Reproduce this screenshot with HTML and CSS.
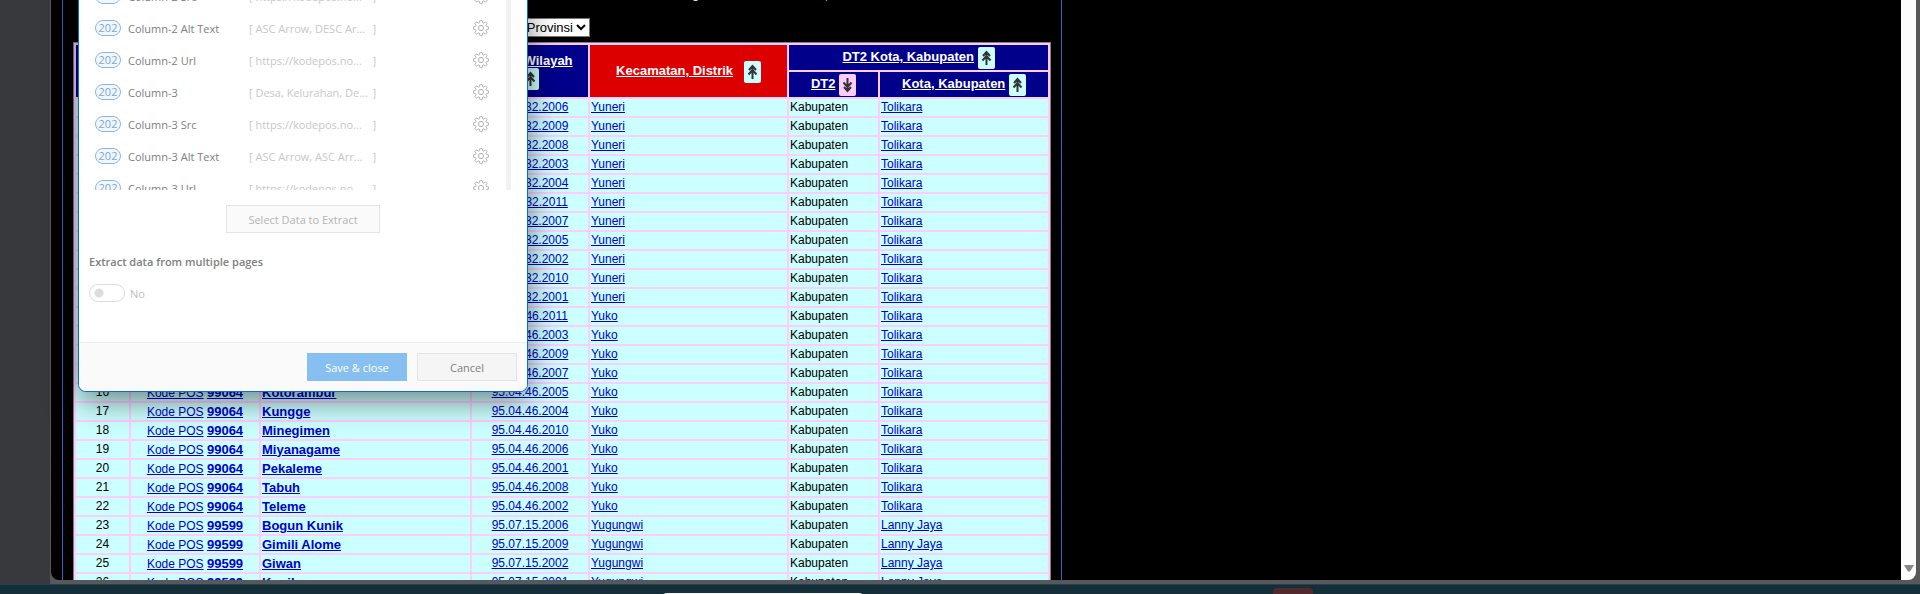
FILE: index.html
```
<!DOCTYPE html>
<html lang="id">
<head>
<meta charset="utf-8">
<title>Kode Pos</title>
<link rel="stylesheet" href="styles.css">
</head>
<body>
<svg class="defs" aria-hidden="true">
  <symbol id="gear" viewBox="0 0 16 16">
    <path d="M6.8 .6h2.4l.4 2 1.2.5 1.7-1.2 1.6 1.6-1.2 1.7.5 1.2 2 .4v2.4l-2 .4-.5 1.2 1.2 1.7-1.6 1.6-1.7-1.2-1.2.5-.4 2H6.8l-.4-2-1.2-.5-1.7 1.2-1.6-1.6 1.2-1.7-.5-1.2-2-.4V6.8l2-.4.5-1.2-1.2-1.7 1.6-1.6 1.7 1.2 1.2-.5z"/>
    <circle cx="8" cy="8" r="2.6"/>
  </symbol>
  <symbol id="arrow" viewBox="0 0 17 22">
    <path d="M8.5 18V4.500M5 9l3.500-4 3.500 4M4.500 13.500l4-4.500 4 4.500"/>
  </symbol>
</svg>
<div class="desktop">
  <div class="window">
    <aside class="rail"></aside>
    <main class="page">
      <div class="sheet">
        <p class="intro">Ruangan di Indonesia <a href="#">Kode pos</a></p>
        <div class="filter">
          <select aria-label="Provinsi"><option>Pilih Provinsi</option></select>
        </div>
        <table class="codes">
          <colgroup><col class="c-no"><col class="c-pos"><col class="c-name"><col class="c-code"><col class="c-kec"><col class="c-dt"><col class="c-kota"></colgroup>
          <thead>
            <tr><th rowspan="2"></th><th rowspan="2"></th><th rowspan="2"></th>
              <th rowspan="2"><a href="#">Kode Wilayah</a><br><svg class="sort"><use href="#arrow"/></svg></th>
              <th rowspan="2" class="active"><a href="#">Kecamatan, Distrik</a> &nbsp; <svg class="sort"><use href="#arrow"/></svg></th>
              <th colspan="2"><a href="#">DT2 Kota, Kabupaten</a> <svg class="sort"><use href="#arrow"/></svg></th></tr>
            <tr><th><a href="#">DT2</a> <svg class="sort desc"><use href="#arrow"/></svg></th>
              <th><a href="#">Kota, Kabupaten</a> <svg class="sort"><use href="#arrow"/></svg></th></tr>
          </thead>
          <tbody id="rows"></tbody>
        </table>
      </div>
    </main>
    <div class="scroll"><svg class="down" viewBox="0 0 10 7"><path d="M0 0h10L6 6.500H4z"/></svg></div>
  </div>
  <div class="taskbar"><span class="search"></span><span class="app"></span></div>
</div>
<section class="dialog" role="dialog" aria-label="Extract data">
  <div class="list" id="fields"></div>
  <div class="pick"><button class="btn faint">Select Data to Extract</button></div>
  <h2 class="heading">Extract data from multiple pages</h2>
  <label class="toggle"><input type="checkbox" role="switch">No</label>
  <footer class="actions"><button class="btn primary">Save &amp; close</button><button class="btn">Cancel</button></footer>
</section>
<script src="app.js"></script>
</body>
</html>
```
FILE: styles.css
```
* { box-sizing: border-box; }
body {
  margin: 0;
  height: 100vh;
  overflow: hidden;
  background: #142e3a;
  font-family: "Liberation Sans", Arial, sans-serif;
  font-size: 12px;
}
.defs { display: none; }
.desktop { display: flex; flex-direction: column; height: 100vh; }
.window {
  flex: 1;
  min-height: 0;
  display: flex;
  background: #57585c;
  padding: 0 4px 4px 0;
}
.rail {
  width: 51px;
  background: #38393d;
  border-right: 1px solid #57585c;
  margin-bottom: -4px;
}
.page {
  flex: 1;
  min-width: 0;
  background: #000;
  overflow: hidden;
  border-bottom-left-radius: 8px;
  padding-left: 11px;
}
.sheet {
  width: 1000px;
  height: 100%;
  overflow: hidden;
  border: solid #3060c8;
  border-width: 0 1px;
  padding: 0 10px;
}
.intro {
  margin: -14px 0 0;
  height: 32px;
  line-height: 15px;
  font-size: 13px;
  color: #fff;
  padding-left: 588px;
}
.intro a { color: #4ab0e0; text-decoration: none; }
.filter { height: 24px; padding-left: 393px; }
.filter select {
  display: block;
  height: 19px;
  width: 124px;
  font: 13px "Liberation Sans", Arial, sans-serif;
  text-align: right;
  background: #fff;
  border: 1px solid #767676;
  padding: 0;
}
.codes {
  table-layout: fixed;
  width: 100%;
  border: 1px solid #808080;
  background: #fcf;
  border-collapse: separate;
  border-spacing: 2px;
}
.c-no { width: 53px; }
.c-pos { width: 128px; }
.c-name { width: 209px; }
.c-code { width: 116px; }
.c-kec { width: 197px; }
.c-dt { width: 89px; }
.codes th {
  height: 25px;
  padding: 2px 1px 1px;
  background: #00008b;
  font-size: 13px;
  line-height: 15px;
  color: #fff;
}
.codes th.active { background: #d00; }
.codes th a { color: #fff; }
.codes td {
  height: 17px;
  padding: 0 1px;
  line-height: 16px;
  vertical-align: top;
  background: #cff;
  white-space: nowrap;
}
.codes td.strong { vertical-align: middle; }
.codes td a { color: #00c; }
.codes td b { font-size: 13px; }
.codes .mid { text-align: center; }
.sort {
  width: 17px;
  height: 22px;
  vertical-align: middle;
  background: #cff;
  border-radius: 2px;
  fill: none;
  stroke: #333;
  stroke-width: 2;
}
.sort.desc { background: #fcf; }
.sort.desc use { transform: rotate(180deg); transform-origin: 50% 50%; }
.scroll {
  width: 15px;
  background: #fdfdfd;
  border-bottom-right-radius: 8px;
  display: flex;
  align-items: flex-end;
  justify-content: center;
  padding-bottom: 8px;
}
.down { width: 10px; height: 7px; fill: #888; }
.taskbar { height: 10px; position: relative; overflow: hidden; border-top: 1px solid #28404a; }
.search {
  position: absolute;
  left: 661px;
  top: 8px;
  width: 204px;
  height: 12px;
  border-radius: 6px;
  background: #f4f6f6;
}
.app {
  position: absolute;
  left: 1273px;
  top: 3px;
  width: 40px;
  height: 12px;
  border-radius: 4px;
  background: #522a2e;
}
.dialog {
  position: absolute;
  left: 78px;
  top: 0;
  width: 450px;
  background: #fff;
  border: 1px solid #0a6cd8;
  border-top: 0;
  border-radius: 0 0 8px 8px;
  box-shadow: 0 8px 32px rgba(0, 0, 0, .5);
  font-family: "Open Sans", "Noto Sans", sans-serif;
  font-size: 11px;
  color: #808080;
  overflow: hidden;
}
.list {
  height: 190px;
  overflow: hidden;
  margin-right: 16px;
  border-right: 5px solid #f1f2f4;
  padding-left: 16px;
  display: flex;
  flex-direction: column;
  justify-content: flex-end;
}
.field {
  flex: none;
  height: 32px;
  display: grid;
  grid-template-columns: 33px 121px 1fr 16px;
  align-items: center;
  padding-right: 17px;
}
.field:last-child { margin-bottom: -14px; }
.pill {
  width: 26px;
  height: 16px;
  border: 1px solid #85b8ea;
  border-radius: 8px;
  background: #f2f7fd;
  color: #7fa8d4;
  line-height: 14px;
  text-align: center;
}
.sample {
  width: 127px;
  display: flex;
  justify-content: space-between;
  white-space: nowrap;
  color: #c8c8c8;
}
.gear { width: 16px; height: 16px; fill: none; stroke: #b0b4b8; }
.pick { display: flex; justify-content: center; padding-top: 15px; }
.btn {
  height: 28px;
  width: 100px;
  padding: 0;
  font: inherit;
  color: #808080;
  background: #f5f5f5;
  border: 1px solid #e4e4e4;
}
.btn.faint { width: 154px; color: #b4b4b4; background: #fafafa; }
.btn.primary { color: #fff; background: #87bff0; border-color: #87bff0; }
.heading { margin: 20px 0 0 10px; font-size: 11px; line-height: 18px; font-weight: 600; }
.toggle {
  display: flex;
  align-items: center;
  gap: 5px;
  width: max-content;
  height: 18px;
  margin: 13px 0 40px 10px;
  color: #c0c0c0;
}
.toggle input {
  appearance: none;
  width: 36px;
  height: 18px;
  margin: 0;
  border: 1px solid #dcdcdc;
  border-radius: 9px;
  background: radial-gradient(circle at 9px 8px, #dcdcdc 4px, #fff 5px);
}
.actions {
  display: flex;
  justify-content: flex-end;
  gap: 10px;
  padding: 10px;
  background: #fafafa;
  border-top: 1px solid #ededed;
}
```
FILE: app.js
```
const rows = [];
const add = (kec, dt, prefix, pos, list) => list.forEach(([n, name]) =>
  rows.push({ kec, dt, code: prefix + n, pos, name: name || "" }));
add("Yuneri", "Tolikara", "95.04.32.", "99064", [["2006"],["2009"],["2008"],["2003"],["2004"],["2011"],["2007"],["2005"],["2002"],["2010"],["2001"]]);
add("Yuko", "Tolikara", "95.04.46.", "99064", [["2011"],["2003"],["2009"],["2007"],["2005","Kotorambur"],["2004","Kungge"],["2010","Minegimen"],["2006","Miyanagame"],["2001","Pekaleme"],["2008","Tabuh"],["2002","Teleme"]]);
add("Yugungwi", "Lanny Jaya", "95.07.15.", "99599", [["2006","Bogun Kunik"],["2009","Gimili Alome"],["2002","Giwan"],["2001","Kunik"]]);
document.getElementById("rows").innerHTML = rows.map((r, i) => `<tr>
<td class="mid">${i + 1}</td><td class="mid strong"><a href="#">Kode POS</a> <a href="#"><b>${r.pos}</b></a></td>
<td class="strong"><a href="#"><b>${r.name}</b></a></td><td class="mid"><a href="#">${r.code}</a></td>
<td><a href="#">${r.kec}</a></td><td>Kabupaten</td><td><a href="#">${r.dt}</a></td></tr>`).join("");

const url = "https://kodepos.no...";
const fields = [["Column-2 Src", url], ["Column-2 Alt Text", "ASC Arrow, DESC Ar..."], ["Column-2 Url", url],
  ["Column-3", "Desa, Kelurahan, De..."], ["Column-3 Src", url], ["Column-3 Alt Text", "ASC Arrow, ASC Arr..."], ["Column-3 Url", url]];
document.getElementById("fields").innerHTML = fields.map(([name, sample]) => `<div class="field">
<span class="pill">202</span><span>${name}</span><span class="sample"><span>[ ${sample}</span><span>]</span></span>
<svg class="gear"><use href="#gear"/></svg></div>`).join("");
```
